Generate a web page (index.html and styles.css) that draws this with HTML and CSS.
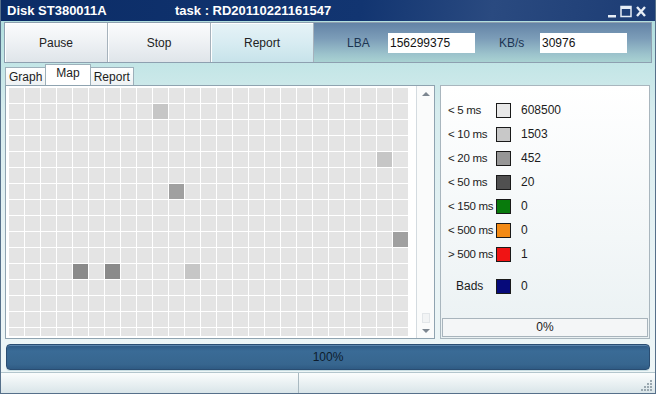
FILE: index.html
```
<!DOCTYPE html>
<html lang="en">
<head>
    <meta charset="UTF-8">
    <title>Disk ST380011A</title>
    <link rel="stylesheet" href="styles.css">
</head>
<body>
    <div class="window">
        <div class="titlebar">
            <span class="title-disk">Disk ST380011A</span>
            <span class="title-task">task : RD20110221161547</span>
            <svg class="win-ctrls" width="42" height="14" viewBox="0 0 42 14">
                <rect x="0" y="10" width="8" height="2.5" fill="#e6edf6"/>
                <rect x="13" y="1.5" width="10" height="10" fill="none" stroke="#e6edf6" stroke-width="1.5"/>
                <rect x="13" y="1" width="10" height="3" fill="#e6edf6"/>
                <path d="M29 2 L37 11 M37 2 L29 11" stroke="#e6edf6" stroke-width="2.4"/>
            </svg>
        </div>

        <div class="toolbar">
            <button class="tool-btn">Pause</button>
            <button class="tool-btn">Stop</button>
            <button class="tool-btn active">Report</button>
            <div class="stats">
                <label class="stat-label">LBA</label>
                <input class="stat-value" type="text" value="156299375">
                <label class="stat-label kbs">KB/s</label>
                <input class="stat-value" type="text" value="30976">
            </div>
        </div>

        <div class="tabs">
            <div class="tab">Graph</div>
            <div class="tab selected">Map</div>
            <div class="tab">Report</div>
        </div>

        <div class="content">
            <div class="map-panel">
                <div class="map">
                    <div class="map-grid">
                        <div class="cell lvl-10" style="grid-area: 2 / 10"></div>
                        <div class="cell lvl-10" style="grid-area: 5 / 24"></div>
                        <div class="cell lvl-20" style="grid-area: 7 / 11"></div>
                        <div class="cell lvl-20" style="grid-area: 10 / 25"></div>
                        <div class="cell lvl-20 dark" style="grid-area: 12 / 5"></div>
                        <div class="cell lvl-20 dark" style="grid-area: 12 / 7"></div>
                        <div class="cell lvl-10" style="grid-area: 12 / 12"></div>
                    </div>
                </div>
                <div class="scrollbar">
                    <span class="arrow up"></span>
                    <span class="thumb"></span>
                    <span class="arrow down"></span>
                </div>
            </div>

            <div class="legend-panel">
                <ul class="legend">
                    <li><span class="legend-label">&lt; 5 ms</span><span class="swatch s5"></span>608500</li>
                    <li><span class="legend-label">&lt; 10 ms</span><span class="swatch s10"></span>1503</li>
                    <li><span class="legend-label">&lt; 20 ms</span><span class="swatch s20"></span>452</li>
                    <li><span class="legend-label">&lt; 50 ms</span><span class="swatch s50"></span>20</li>
                    <li><span class="legend-label">&lt; 150 ms</span><span class="swatch s150"></span>0</li>
                    <li><span class="legend-label">&lt; 500 ms</span><span class="swatch s500"></span>0</li>
                    <li><span class="legend-label">&gt; 500 ms</span><span class="swatch sover"></span>1</li>
                    <li class="bads"><span class="legend-label">Bads</span><span class="swatch sbad"></span>0</li>
                </ul>
                <div class="legend-foot">0%</div>
            </div>
        </div>

        <div class="progress"><span>100%</span></div>

        <div class="statusbar">
            <div class="status-cell"></div>
            <div class="status-cell grow"></div>
            <svg class="grip" width="12" height="12" viewBox="0 0 12 12">
                <g fill="#9aa8b0">
                    <rect x="9" y="1" width="2" height="2"/>
                    <rect x="6" y="4" width="2" height="2"/><rect x="9" y="4" width="2" height="2"/>
                    <rect x="3" y="7" width="2" height="2"/><rect x="6" y="7" width="2" height="2"/><rect x="9" y="7" width="2" height="2"/>
                    <rect x="0" y="10" width="2" height="2"/><rect x="3" y="10" width="2" height="2"/><rect x="6" y="10" width="2" height="2"/><rect x="9" y="10" width="2" height="2"/>
                </g>
            </svg>
        </div>
    </div>
</body>
</html>
```

FILE: styles.css
```
body {
    margin: 0;
    font-family: 'Liberation Sans', Arial, sans-serif;
    font-size: 12px;
    color: #1c1c1c;
}
.window {
    width: 656px;
    height: 394px;
    box-sizing: border-box;
    border-left: 1px solid #56708a;
    border-right: 1px solid #56708a;
    border-bottom: 1px solid #56708a;
    background: linear-gradient(#a9d9d9 0, #b9e2e2 40px, #d6ecee 110px, #e8f3f5 260px, #eef6f7);
    display: flex;
    flex-direction: column;
    overflow: hidden;
}

/* title bar */
.titlebar {
    height: 21px;
    flex: none;
    display: flex;
    align-items: center;
    padding-left: 6px;
    background: linear-gradient(100deg, #0b2c66 0, #123571 55%, #2a4a80 75%, #1c3c74 100%);
    color: #fff;
    font-weight: bold;
    font-size: 13px;
}
.title-disk {
    width: 168px;
}
.title-task {
    flex: 1;
}
.win-ctrls {
    margin-right: 5px;
    margin-top: 2px;
}

/* toolbar */
.toolbar {
    height: 41px;
    flex: none;
    margin: 1px 3px 0 3px;
    display: flex;
    border: 1px solid #8ea0b0;
    box-sizing: border-box;
}
.tool-btn {
    width: 103px;
    border: none;
    border-right: 1px solid #a6b2bc;
    background: linear-gradient(#fbfcfd, #eef1f4 50%, #dfe5ea);
    font-family: inherit;
    font-size: 12px;
    color: #222;
    box-shadow: inset 1px 1px 0 #fff;
}
.tool-btn.active {
    background: linear-gradient(#e6f3f7, #d8ecf2 50%, #c7e3ea);
}
.stats {
    flex: 1;
    display: flex;
    align-items: center;
    padding-left: 33px;
    background: linear-gradient(#6383a6, #7c9db8 40%, #9cc3cc 80%, #a9d2d2);
}
.stat-label {
    color: #1c3552;
    width: 41px;
}
.stat-label.kbs {
    margin-left: 24px;
}
.stat-value {
    width: 87px;
    height: 20px;
    box-sizing: border-box;
    border: none;
    padding: 0 2px;
    font-family: inherit;
    font-size: 12px;
    color: #111;
    background: #fff;
}

/* tabs */
.tabs {
    height: 20px;
    flex: none;
    margin-top: 2px;
    padding-left: 4px;
    display: flex;
    align-items: flex-end;
}
.tab {
    height: 17px;
    line-height: 18px;
    padding: 0 3px;
    border: 1px solid #9db0ba;
    border-bottom: none;
    background: linear-gradient(#ffffff, #eef2f4);
    margin-right: -1px;
}
.tab.selected {
    height: 20px;
    line-height: 17px;
    padding: 0 10px;
    background: #fff;
    position: relative;
    z-index: 1;
}

/* content */
.content {
    height: 254px;
    flex: none;
    margin: 0 5px 0 4px;
    display: flex;
    gap: 5px;
}
.map-panel {
    width: 430px;
    box-sizing: border-box;
    border: 1px solid #8fa3b0;
    background: #fff;
    display: flex;
}
.map {
    flex: 1;
    padding: 2px 0 0 3px;
    overflow: hidden;
}
.map-grid {
    width: 400px;
    height: 248px;
    display: grid;
    grid-template-columns: repeat(25, 15px);
    grid-template-rows: repeat(16, 15px);
    gap: 1px;
    overflow: hidden;
    background-color: #e4e4e4;
    background-image: linear-gradient(to right, transparent 15px, #fff 15px),
                      linear-gradient(to bottom, transparent 15px, #fff 15px);
    background-size: 16px 16px;
}
.cell.lvl-10 { background: #c6c6c6; }
.cell.lvl-20 { background: #a0a0a0; }
.cell.lvl-20.dark { background: #8a8a8a; }
.scrollbar {
    width: 17px;
    border-left: 1px solid #d4dbe0;
    background: #fafbfb;
    display: flex;
    flex-direction: column;
    align-items: center;
    padding: 6px 0 5px;
}
.arrow {
    width: 0;
    height: 0;
    border-left: 4px solid transparent;
    border-right: 4px solid transparent;
}
.arrow.up { border-bottom: 4px solid #7c8690; }
.arrow.down { border-top: 4px solid #7c8690; }
.thumb {
    margin-top: auto;
    margin-bottom: 6px;
    width: 6px;
    height: 8px;
    border: 1px solid #e2e6e9;
    background: #f2f4f5;
}

/* legend */
.legend-panel {
    flex: 1;
    border: 1px solid #a9b6be;
    background: linear-gradient(#ffffff, #f3f7f8 60%, #eaf1f3);
    display: flex;
    flex-direction: column;
    padding: 1px;
}
.legend {
    list-style: none;
    margin: 0;
    padding: 11px 0 0 6px;
}
.legend li {
    height: 24px;
    display: flex;
    align-items: center;
    white-space: nowrap;
}
.legend-label {
    width: 48px;
    font-size: 11.5px;
    letter-spacing: -0.3px;
}
.legend li.bads {
    margin-top: 8px;
}
.legend li.bads .legend-label {
    width: 40px;
    padding-left: 8px;
    font-size: 12px;
    letter-spacing: 0;
}
.swatch {
    flex: none;
    width: 13px;
    height: 13px;
    border: 1px solid #1a1a1a;
    margin-right: 10px;
}
.s5 { background: #e8e8e8; }
.s10 { background: #c8c8c8; }
.s20 { background: #969696; }
.s50 { background: #505050; }
.s150 { background: #087a0c; }
.s500 { background: #f38a14; }
.sover { background: #f01414; }
.sbad { background: #060a7a; }
.legend-foot {
    margin-top: auto;
    height: 17px;
    line-height: 17px;
    text-align: center;
    border: 1px solid #a8b4bc;
    background: #f4f6f7;
}

/* progress */
.progress {
    height: 26px;
    flex: none;
    margin: 5px 5px 0 5px;
    box-sizing: border-box;
    border: 1px solid #2a4d72;
    border-radius: 4px;
    background: linear-gradient(#2d5883, #3a6b96 25%, #37668f 80%, #2f5b84);
    box-shadow: inset 0 1px 0 #5b86ad, 0 1px 0 #c8dde2;
    text-align: center;
    line-height: 24px;
    color: #0d1c2c;
}

/* status bar */
.statusbar {
    flex: 1;
    margin-top: 2px;
    display: flex;
    align-items: stretch;
    border-top: 1px solid #b3c6cd;
    background: linear-gradient(#fbfdfd, #eaf1f3 50%, #d9e5e9);
}
.status-cell {
    width: 297px;
    border-right: 1px solid #a9b9c1;
}
.status-cell.grow {
    flex: 1;
    border-right: none;
}
.grip {
    align-self: flex-end;
    margin: 0 2px 2px 0;
}
```
